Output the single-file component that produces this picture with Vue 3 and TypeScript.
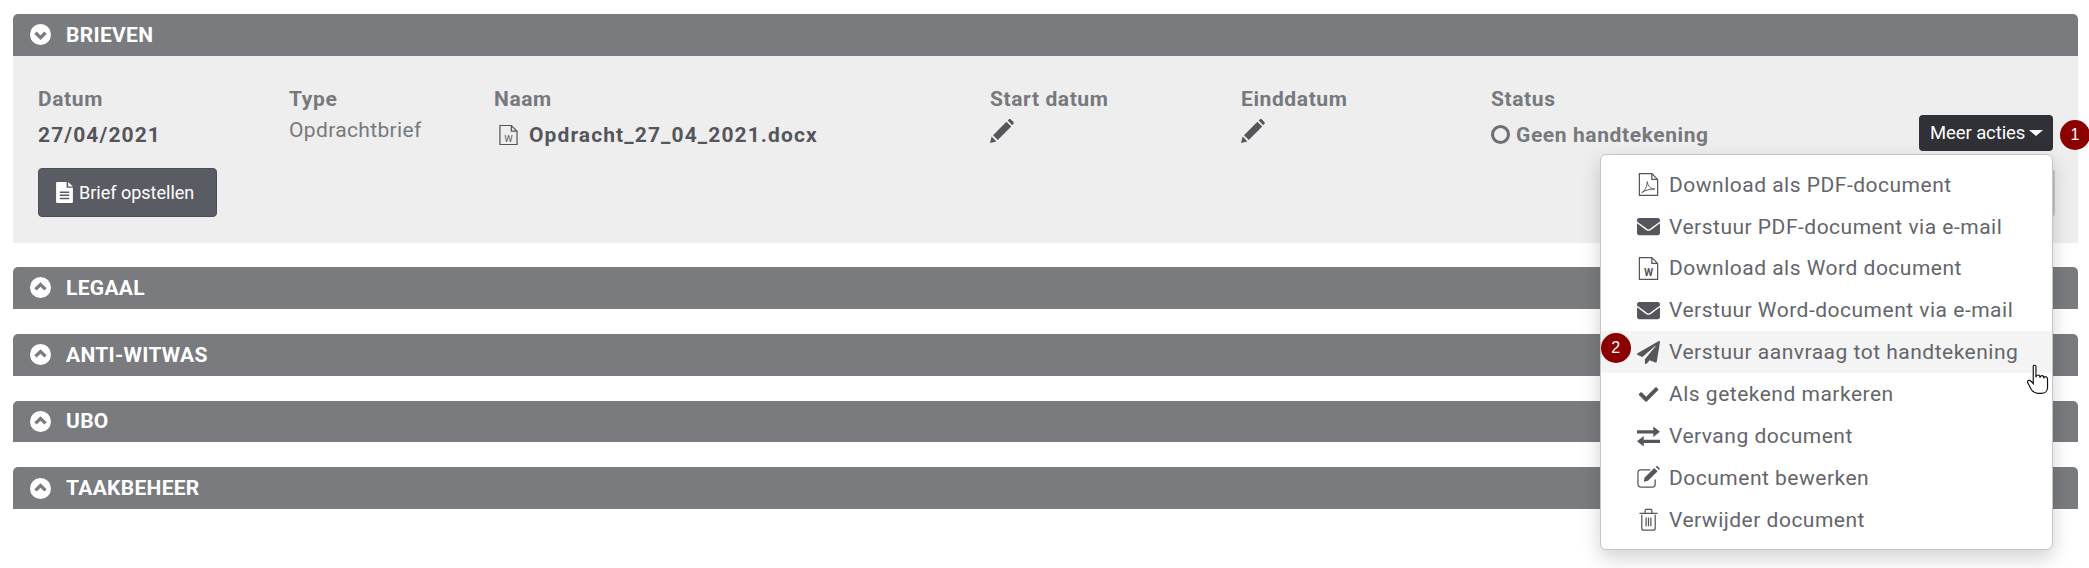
<script setup lang="ts">
type MenuIcon = 'pdf' | 'mail' | 'word' | 'plane' | 'check' | 'swap' | 'edit' | 'trash'

const columns = [
  { label: 'Datum', kind: 'date', value: '27/04/2021' },
  { label: 'Type', kind: 'muted', value: 'Opdrachtbrief' },
  { label: 'Naam', kind: 'file', value: 'Opdracht_27_04_2021.docx' },
  { label: 'Start datum', kind: 'pencil', value: '' },
  { label: 'Einddatum', kind: 'pencil', value: '' },
  { label: 'Status', kind: 'status', value: 'Geen handtekening' },
]

const menu: { icon: MenuIcon; label: string; active?: boolean }[] = [
  { icon: 'pdf', label: 'Download als PDF-document' },
  { icon: 'mail', label: 'Verstuur PDF-document via e-mail' },
  { icon: 'word', label: 'Download als Word document' },
  { icon: 'mail', label: 'Verstuur Word-document via e-mail' },
  { icon: 'plane', label: 'Verstuur aanvraag tot handtekening', active: true },
  { icon: 'check', label: 'Als getekend markeren' },
  { icon: 'swap', label: 'Vervang document' },
  { icon: 'edit', label: 'Document bewerken' },
  { icon: 'trash', label: 'Verwijder document' },
]

const collapsed = ['LEGAAL', 'ANTI-WITWAS', 'UBO', 'TAAKBEHEER']
</script>

<template>
  <div class="page">
    <section class="panel">
      <header class="panel-head">
        <svg class="chevron" viewBox="0 0 20 20">
          <circle cx="10" cy="10" r="10" fill="#fff" />
          <polyline points="5.2,8.4 10,13 14.8,8.4" />
        </svg>
        <span>BRIEVEN</span>
      </header>
      <div class="panel-body">
        <div class="doc-row">
          <div v-for="col in columns" :key="col.label" class="col">
            <div class="col-label">{{ col.label }}</div>
            <div v-if="col.kind === 'date'" class="strong">{{ col.value }}</div>
            <div v-else-if="col.kind === 'muted'" class="muted">{{ col.value }}</div>
            <div v-else-if="col.kind === 'file'" class="strong with-icon">
              <svg class="file-icon" viewBox="0 0 20 22">
                <path d="M1 1h12l6 6v14H1z M13 1v6h6" />
                <text x="10" y="18" text-anchor="middle">W</text>
              </svg>
              {{ col.value }}
            </div>
            <div v-else-if="col.kind === 'pencil'" class="pencil-cell">
              <svg class="pencil" viewBox="0 0 24 24">
                <path d="M0 24l1.6-6.4 4.8 4.8z" />
                <path d="M3 16.2L16.4 2.8l4.8 4.8L7.8 21z" />
                <path d="M17.8 1.4L19.2 0q.6-.4 1.2 0l3.2 3.2q.4.6 0 1.2l-1.4 1.8z" />
              </svg>
            </div>
            <div v-else class="status">
              <span class="ring"></span>
              {{ col.value }}
            </div>
          </div>
          <div class="actions">
            <button class="more-btn" type="button">
              Meer acties
              <span class="caret"></span>
            </button>
            <span class="badge badge-one">1</span>
            <span class="peek-btn"></span>
            <ul class="menu">
              <li v-for="item in menu" :key="item.label" class="menu-item" :class="{ active: item.active }">
                <span v-if="item.active" class="badge badge-two">2</span>
                <svg v-if="item.icon === 'pdf'" class="menu-icon" viewBox="0 0 24 24">
                  <path class="line" d="M2.500 .7h13l6 6v16.600h-19z M15.500 .7v6h6" />
                  <path class="line thin" d="M5 20.500c3.500-2 5.500-6.500 5.800-11.500 .4 4.500 3.200 7.500 7.700 7.800-4.500-.3-9.500 1-13.500 3.700z" />
                </svg>
                <svg v-else-if="item.icon === 'mail'" class="menu-icon" viewBox="0 0 512 512">
                  <path d="M502.3 190.8c3.9-3.1 9.7-.2 9.700 4.700V400c0 26.500-21.500 48-48 48H48c-26.500 0-48-21.500-48-48V195.600c0-5 5.700-7.800 9.700-4.700 22.400 17.400 52.100 39.500 154.100 113.600 21.100 15.400 56.700 47.800 92.200 47.600 35.700.3 72-32.800 92.300-47.600 102-74.100 131.600-96.300 154-113.700zM256 320c23.200.4 56.600-29.200 73.400-41.400 132.700-96.300 142.800-104.700 173.400-128.700 5.800-4.500 9.200-11.500 9.200-18.900v-19c0-26.500-21.500-48-48-48H48C21.500 64 0 85.500 0 112v19c0 7.400 3.400 14.300 9.200 18.900 30.600 23.900 40.700 32.400 173.400 128.700 16.800 12.200 50.200 41.800 73.400 41.400z" />
                </svg>
                <svg v-else-if="item.icon === 'word'" class="menu-icon" viewBox="0 0 24 24">
                  <path class="line" d="M2.500 .7h13l6 6v16.600h-19z M15.500 .7v6h6" />
                  <text x="12" y="20" text-anchor="middle">W</text>
                </svg>
                <svg v-else-if="item.icon === 'plane'" class="menu-icon" viewBox="0 0 512 512">
                  <path d="M476 3.200L12.500 270.600c-18.100 10.400-15.800 35.600 2.200 43.200L121 358.400l287.300-253.200c5.500-4.900 13.300 2.600 8.600 8.300L176 407v80.500c0 23.600 28.500 32.900 42.500 15.800L282 426l124.600 52.200c14.200 6 30.400-2.900 33-18.200l72-432C515 7.800 493.300-6.800 476 3.200z" />
                </svg>
                <svg v-else-if="item.icon === 'check'" class="menu-icon" viewBox="0 0 512 512">
                  <path d="M173.900 439.400l-166.400-166.400c-10-10-10-26.200 0-36.200l36.200-36.200c10-10 26.200-10 36.200 0L192 312.700 432.100 72.600c10-10 26.200-10 36.200 0l36.200 36.200c10 10 10 26.200 0 36.200l-294.400 294.400c-10 10-26.200 10-36.200 0z" transform="translate(40 40) scale(.85)" />
                </svg>
                <svg v-else-if="item.icon === 'swap'" class="menu-icon" viewBox="0 0 24 24">
                  <path d="M0 6.500h17V2.500l7 5.500-7 5.500V9.800H0z" transform="translate(0 -1)" />
                  <path d="M24 15.500H7V11.500l-7 5.500 7 5.500v-3.700h17z" />
                </svg>
                <svg v-else-if="item.icon === 'edit'" class="menu-icon" viewBox="0 0 24 24">
                  <path class="line" d="M19 14v5a3 3 0 0 1-3 3H4a3 3 0 0 1-3-3V7a3 3 0 0 1 3-3h10" />
                  <path d="M8 12l10-10 3.500 3.500-10 10-4.500 1z" />
                  <path d="M19.500.8l1-.7q.6-.2 1 .2l2 2q.4.5.1 1l-.8 1z" />
                </svg>
                <svg v-else class="menu-icon" viewBox="0 0 24 24">
                  <path class="line" d="M5 7v14a2 2 0 0 0 2 2h10a2 2 0 0 0 2-2V7M2.500 5.500h19M8.500 5V2.500a1 1 0 0 1 1-1h5a1 1 0 0 1 1 1V5" />
                  <path class="line" d="M9.500 10v9M12 10v9M14.500 10v9" />
                </svg>
                <span>{{ item.label }}</span>
              </li>
            </ul>
            <svg class="cursor" viewBox="0 0 28 34">
              <path d="M7 2.500c0-2 3-2 3 0v12c.5-1 .5-2.500 2.500-2.500s2 1.500 2 3c.3-1.500 1-2.500 2.500-2.300s1.800 1.500 1.800 3c.4-1.200 1-2 2.300-1.800 1.500.2 1.900 1.500 1.900 3V26c0 4-3 6.500-7 6.500h-4c-3 0-5-1.500-7-4L1 21c-1-1.500 0-3.500 2-3 1.500.4 2.800 2 4 3.500z" />
            </svg>
          </div>
        </div>
        <button class="compose-btn" type="button">
          <svg viewBox="0 0 16 20">
            <path fill-rule="evenodd" d="M1 0h9v5.500h6V19a1 1 0 0 1-1 1H1a1 1 0 0 1-1-1V1a1 1 0 0 1 1-1zm10.500 0L16 4.200h-4.500zM3.500 9v1.400h9V9zm0 3v1.400h9V12zm0 3v1.400h9V15z" />
          </svg>
          Brief opstellen
        </button>
      </div>
    </section>

    <section v-for="title in collapsed" :key="title" class="panel">
      <header class="panel-head">
        <svg class="chevron" viewBox="0 0 20 20">
          <circle cx="10" cy="10" r="10" fill="#fff" />
          <polyline points="5.200,11.800 10,7.200 14.800,11.800" />
        </svg>
        <span>{{ title }}</span>
      </header>
    </section>
  </div>
</template>

<style>
html {
  overflow: hidden;
  background: #fff;
}

body {
  min-height: 568px;
}
</style>

<style scoped>
.page {
  padding: 14px 11px 0 13px;
  font-family: 'Roboto', 'Noto Sans', sans-serif;
  color: #77797d;
}

.panel {
  margin-bottom: 25px;
}

.panel-head {
  display: flex;
  align-items: center;
  gap: 15px;
  height: 41.750px;
  padding-left: 17px;
  background: #797b7f;
  border-radius: 5px 5px 0 0;
  color: #fff;
  font-size: 21px;
  font-weight: 700;
  letter-spacing: 0.3px;
}

.chevron {
  width: 21px;
  height: 21px;
  flex: none;
}

.chevron polyline {
  fill: none;
  stroke: #797b7f;
  stroke-width: 3.2;
}

.panel-body {
  height: 187.250px;
  margin-bottom: -1px;
  padding: 28px 25px 0;
  background: #eee;
  box-sizing: border-box;
}

.doc-row {
  display: grid;
  grid-template-columns: 251px 205px 496px 251px 250px 428px 134px;
  height: 84px;
}

.col-label {
  height: 30px;
  font-size: 21px;
  font-weight: 700;
  line-height: 30px;
  letter-spacing: 0.6px;
}

.strong {
  margin-top: 6px;
  color: #55565c;
  font-size: 21px;
  font-weight: 700;
  line-height: 30px;
  letter-spacing: 1.100px;
}

.muted {
  margin-top: 1px;
  font-size: 21px;
  line-height: 30px;
  letter-spacing: 0.35px;
}

.with-icon {
  display: flex;
  align-items: center;
  gap: 11px;
  padding-left: 5px;
}

.file-icon {
  width: 19px;
  height: 22px;
  flex: none;
}

.file-icon path {
  fill: none;
  stroke: #55565c;
  stroke-width: 1.3;
}

.file-icon text {
  fill: #55565c;
  font: 10px 'Roboto', sans-serif;
  letter-spacing: 0;
}

.pencil-cell {
  margin-top: 5px;
  line-height: 0;
}

.pencil {
  width: 24px;
  height: 24px;
  fill: #55565c;
}

.status {
  display: flex;
  align-items: center;
  gap: 6px;
  margin-top: 6px;
  font-size: 21px;
  font-weight: 700;
  line-height: 30px;
  letter-spacing: 0.6px;
}

.ring {
  width: 19px;
  height: 19px;
  border: 3px solid #6c6e73;
  border-radius: 50%;
  box-sizing: border-box;
}

.actions {
  position: relative;
}

.more-btn {
  display: flex;
  align-items: center;
  gap: 4px;
  width: 134px;
  height: 36px;
  margin-top: 31px;
  padding: 0 0 0 11px;
  background: #2f3136;
  border: 0;
  border-radius: 4px;
  color: #fff;
  font: 400 18.500px 'Roboto', sans-serif;
  letter-spacing: -0.1px;
  white-space: nowrap;
}

.caret {
  width: 0;
  height: 0;
  border-left: 7px solid transparent;
  border-right: 7px solid transparent;
  border-top: 6px solid #fff;
}

.badge {
  position: absolute;
  display: flex;
  align-items: center;
  justify-content: center;
  width: 30px;
  height: 30px;
  border-radius: 50%;
  background: #8b0000;
  color: #fff;
  font: 16px 'Liberation Sans', sans-serif;
}

.badge-one {
  top: 36px;
  left: 141px;
}

.badge-two {
  top: 2px;
  left: 0;
}

.peek-btn {
  position: absolute;
  top: 85px;
  right: -2px;
  width: 60px;
  height: 48px;
  background: #c6c6c6;
  border-radius: 4px;
}

.menu {
  position: absolute;
  z-index: 2;
  top: 70px;
  right: 0;
  width: 453px;
  height: 396px;
  margin: 0;
  padding: 9px 0;
  box-sizing: border-box;
  list-style: none;
  background: #fff;
  border: 1px solid #c4c4c4;
  border-radius: 6px;
  box-shadow: 0 8px 20px rgba(0, 0, 0, 0.18);
}

.menu-item {
  position: relative;
  display: flex;
  align-items: center;
  gap: 9px;
  height: 41.900px;
  padding-left: 36px;
  color: #63656b;
  font-size: 21px;
  letter-spacing: 0.5px;
  white-space: nowrap;
}

.menu-item.active {
  background: #f4f4f4;
}

.menu-icon {
  width: 23px;
  height: 23px;
  flex: none;
  fill: #55565c;
}

.menu-icon .line {
  fill: none;
  stroke: #55565c;
  stroke-width: 1.300;
}

.menu-icon .thin {
  stroke-width: 1;
}

.menu-icon text {
  font: 700 11px 'Roboto', sans-serif;
  fill: #55565c;
  letter-spacing: 0;
}

.cursor {
  position: absolute;
  z-index: 3;
  top: 279px;
  left: 108px;
  width: 25px;
  height: 33px;
  fill: #fff;
  stroke: #111;
  stroke-width: 1.300;
}

.compose-btn {
  display: flex;
  align-items: center;
  gap: 6px;
  width: 179px;
  height: 49px;
  padding: 0 0 0 17px;
  background: #5a5c63;
  border: 1px solid #4d4f55;
  border-radius: 4px;
  color: #fff;
  font: 400 18px 'Roboto', sans-serif;
}

.compose-btn svg {
  width: 17px;
  height: 21px;
  fill: #fff;
}
</style>
